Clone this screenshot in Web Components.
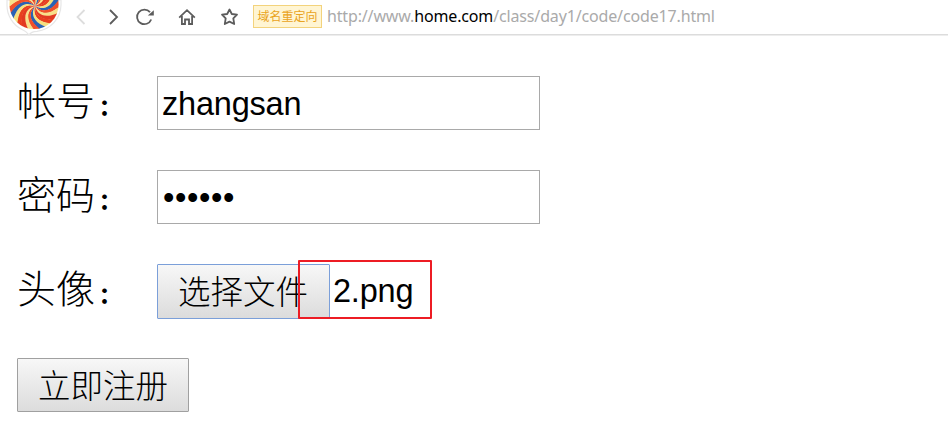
<!DOCTYPE html>
<html lang="zh-CN"><head><meta charset="utf-8"><title>注册</title>
<style>body{margin:0;background:#fff;overflow:hidden}</style></head><body>
<register-page></register-page>
<script>
const define=(name,html,setup)=>customElements.define(name,class extends HTMLElement{
  constructor(){super();this.attachShadow({mode:'open'}).innerHTML=html;}
  connectedCallback(){if(setup)setup(this,this.shadowRoot);}
});

define('swirl-logo',`<style>:host{display:block;width:68px;height:37px}svg{display:block}</style>
<svg width="68" height="37" viewBox="0 0 68 37"><defs><clipPath id="ball"><circle cx="34" cy="4.5" r="24.6"/></clipPath></defs>
<path d="M7 0V5A27 27 0 0 0 22 29.5Q26 31 29 34.8Q31 31.5 37 31.3A27 27 0 0 0 61 5V0Z" fill="#fff" stroke="#e6e6e6" stroke-width="1.2"/>
<g id="blades" clip-path="url(#ball)"></g></svg>`,(h,r)=>{
  const g=r.getElementById('blades'),n=24,cx=35,cy=6,colors=['#e8401f','#f6df80','#2b62b4','#f0502a','#f8e08a','#e23a22'];
  const pt=(a,d)=>(cx+Math.cos(a)*d).toFixed(2)+' '+(cy+Math.sin(a)*d).toFixed(2);
  let s='';
  for(let i=0;i<n;i++){const a=i*2*Math.PI/n,b=a+2*Math.PI/n+.03;
    s+='<path fill="'+colors[i%6]+'" d="M'+cx+' '+cy+'C'+pt(a,10)+' '+pt(a-.4,20)+' '+pt(a-1.3,34)+'L'+pt(b-1.3,34)+'C'+pt(b-.4,20)+' '+pt(b,10)+' '+cx+' '+cy+'Z"/>';}
  g.innerHTML=s;
});

define('nav-icon',`<style>:host{display:block;width:20px;height:20px}svg{display:block;fill:none;stroke:currentColor;stroke-width:1.8}</style><svg width="20" height="20" viewBox="0 0 20 20"></svg>`,(h,r)=>{
  r.querySelector('svg').innerHTML={
    back:'<path d="M13.5 3L6.5 10L13.5 17"/>',
    next:'<path d="M7 3L14 10L7 17"/>',
    reload:'<path d="M16.2 12.5A7.3 7.3 0 1 1 15 5.2"/><path d="M18.8 3.2V8.4H12.8Z" fill="currentColor" stroke="none"/>',
    home:'<path d="M2.2 10.6L10 3.2L17.8 10.6M4.9 9V17H8V12.5H12V17H15.1V9"/>',
    star:'<path stroke-linejoin="round" d="M10.5 2.5L12.8 7L18 7.7L14.3 11.4L15.2 17L10.5 14.6L5.8 17L6.7 11.4L3 7.7L8.2 7Z"/>'
  }[h.getAttribute('kind')];
});

define('browser-bar',`<style>
:host{display:flex;align-items:flex-start;box-sizing:border-box;height:37px;background:linear-gradient(#fff 34px,#dcdcdc 34px,#dcdcdc 35px,#ededed 35px,#ededed 36px,#fff 36px)}
nav{display:flex;gap:12px;margin:7px 0 0 3px;color:#5c5c5c}
nav-icon[kind=back]{color:#ddd}nav-icon[kind=home],nav-icon[kind=star]{margin-left:10px}
.tag{box-sizing:border-box;width:69px;height:23px;margin:5px 0 0 14px;border:1px solid #f3d37c;background:#fff5d3;color:#e9a321;font:12px/20px "Noto Sans CJK SC",sans-serif;text-align:center;white-space:nowrap}
.url{margin:5px 0 0 5px;font:16px/22px "Noto Sans",sans-serif;color:#aaa;white-space:nowrap;letter-spacing:-.15px}b{font-weight:400;color:#000}
</style><swirl-logo></swirl-logo><nav><nav-icon kind="back"></nav-icon><nav-icon kind="next"></nav-icon><nav-icon kind="reload"></nav-icon><nav-icon kind="home"></nav-icon><nav-icon kind="star"></nav-icon></nav>
<span class="tag">域名重定向</span><span class="url">http://www.<b>home.com</b>/class/day1/code/code17.html</span>`);

define('field-row',`<style>:host{display:flex;height:54px}.l{width:140px;font:300 39px/44px "Noto Sans CJK SC",sans-serif;white-space:nowrap}.c{font-size:22px;font-weight:900;margin-left:4px}</style><span class="l"><span class="t"></span><span class="c">：</span></span><slot></slot>`,(h,r)=>{r.querySelector('.t').textContent=h.getAttribute('label');});

define('text-box',`<style>:host{display:block;box-sizing:border-box;width:383px;height:54px;border:1px solid #a9a9a9;padding:0 4px;font:32.5px/54px "Liberation Sans",Arial,sans-serif;letter-spacing:-.2px}:host([secret]){letter-spacing:.6px;padding-left:5px}</style><slot></slot>`);

define('push-button',`<style>:host{display:block;box-sizing:border-box;width:172px;height:54px;border:1px solid #a0a0a0;border-radius:1px;background:linear-gradient(#f7f7f7,#dcdcdc);font:300 32.5px/50px "Noto Sans CJK SC",sans-serif;text-align:center;white-space:nowrap}:host([active]){height:55px;width:173px;border-color:#7b9fd9;padding-right:1px}</style><slot></slot>`);

define('file-picker',`<style>:host{display:flex;position:relative}.n{margin-left:3px;font:32.5px/54px "Liberation Sans",Arial,sans-serif;letter-spacing:-.2px}
.mark{position:absolute;left:141px;top:-4px;width:134px;height:59px;box-sizing:border-box;border:2px solid #ed1c24;border-radius:1px}</style><push-button active>选择文件</push-button><span class="n"><slot></slot></span><div class="mark"></div>`);

define('register-page',`<style>:host{display:block;width:948px;height:433px;background:#fff;color:#000}
main{display:flex;flex-direction:column;gap:40px;padding:39px 17px 0}</style>
<browser-bar></browser-bar><main><field-row label="帐号"><text-box>zhangsan</text-box></field-row><field-row label="密码"><text-box secret>••••••</text-box></field-row><field-row label="头像"><file-picker>2.png</file-picker></field-row><push-button>立即注册</push-button></main>`);
</script></body></html>
